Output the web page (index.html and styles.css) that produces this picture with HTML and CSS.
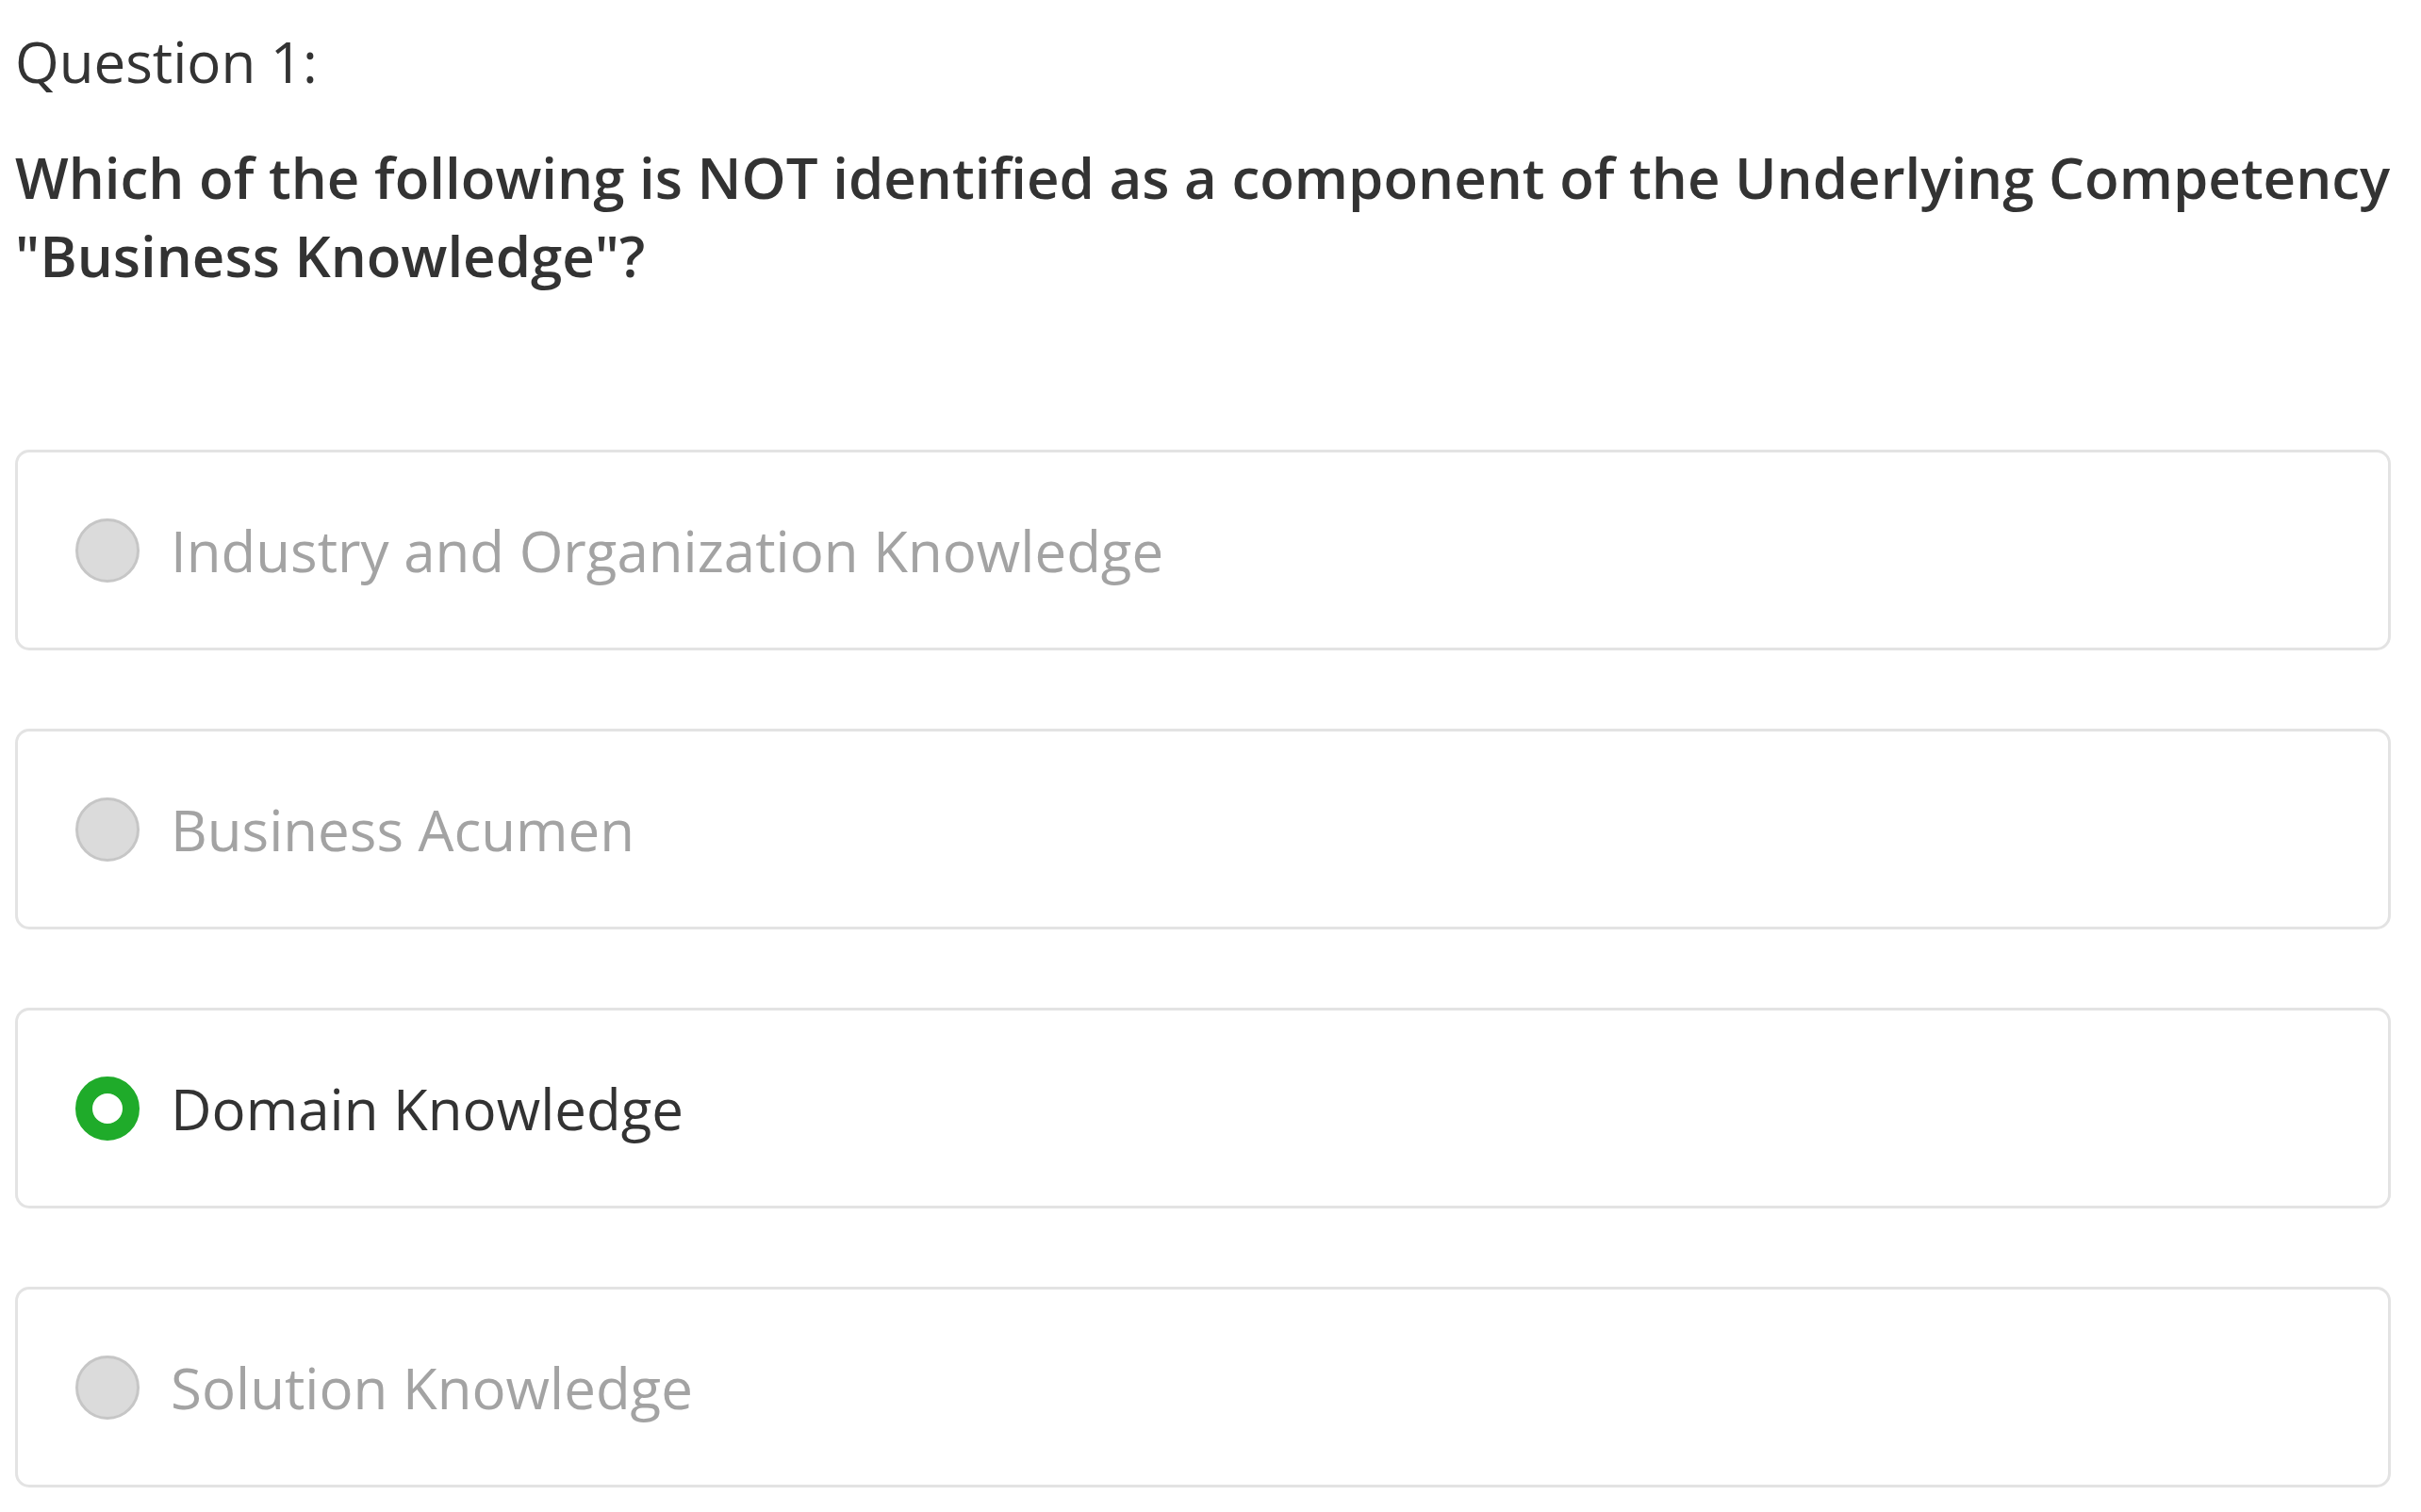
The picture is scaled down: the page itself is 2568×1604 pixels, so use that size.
FILE: index.html
```html
<!DOCTYPE html>
<html lang="en">
<head>
<meta charset="utf-8">
<title>Question 1</title>
<link rel="stylesheet" href="styles.css">
</head>
<body>
<main class="quiz">
  <div class="q-label">Question 1:</div>
  <div class="q-text">Which of the following is NOT identified as a component of the Underlying Competency "Business Knowledge"?</div>
  <div class="options">
    <div class="option"><span class="radio"></span><span class="opt-text">Industry and Organization Knowledge</span></div>
    <div class="option"><span class="radio"></span><span class="opt-text">Business Acumen</span></div>
    <div class="option selected"><span class="radio"></span><span class="opt-text">Domain Knowledge</span></div>
    <div class="option"><span class="radio"></span><span class="opt-text">Solution Knowledge</span></div>
  </div>
</main>
</body>
</html>
```
FILE: styles.css
```css
html, body {
  margin: 0;
  padding: 0;
  background: #ffffff;
}
body {
  font-family: "Open Sans", "Noto Sans", "Liberation Sans", sans-serif;
  color: #333333;
}
.quiz {
  padding: 23px 32px 0 16px;
}
.q-label {
  font-size: 60px;
  line-height: 84px;
  font-weight: 400;
  color: #333333;
}
.q-text {
  margin-top: 40px;
  font-size: 60px;
  line-height: 83px;
  font-weight: 600;
  color: #333333;
}
.options {
  margin-top: 164px;
  display: flex;
  flex-direction: column;
  gap: 83px;
}
.option {
  box-sizing: border-box;
  height: 213px;
  border: 3px solid #e3e3e3;
  border-radius: 15px;
  display: flex;
  align-items: center;
  padding-left: 61px;
}
.radio {
  box-sizing: border-box;
  width: 68px;
  height: 68px;
  border-radius: 50%;
  background: #dbdbdb;
  border: 3px solid #c6c6c6;
  flex: none;
}
.opt-text {
  margin-left: 33px;
  font-size: 60px;
  line-height: 84px;
  color: #a3a3a3;
}
.selected .radio {
  background: #ffffff;
  border: 18px solid #1fab2a;
}
.selected .opt-text {
  color: #333333;
}
```
